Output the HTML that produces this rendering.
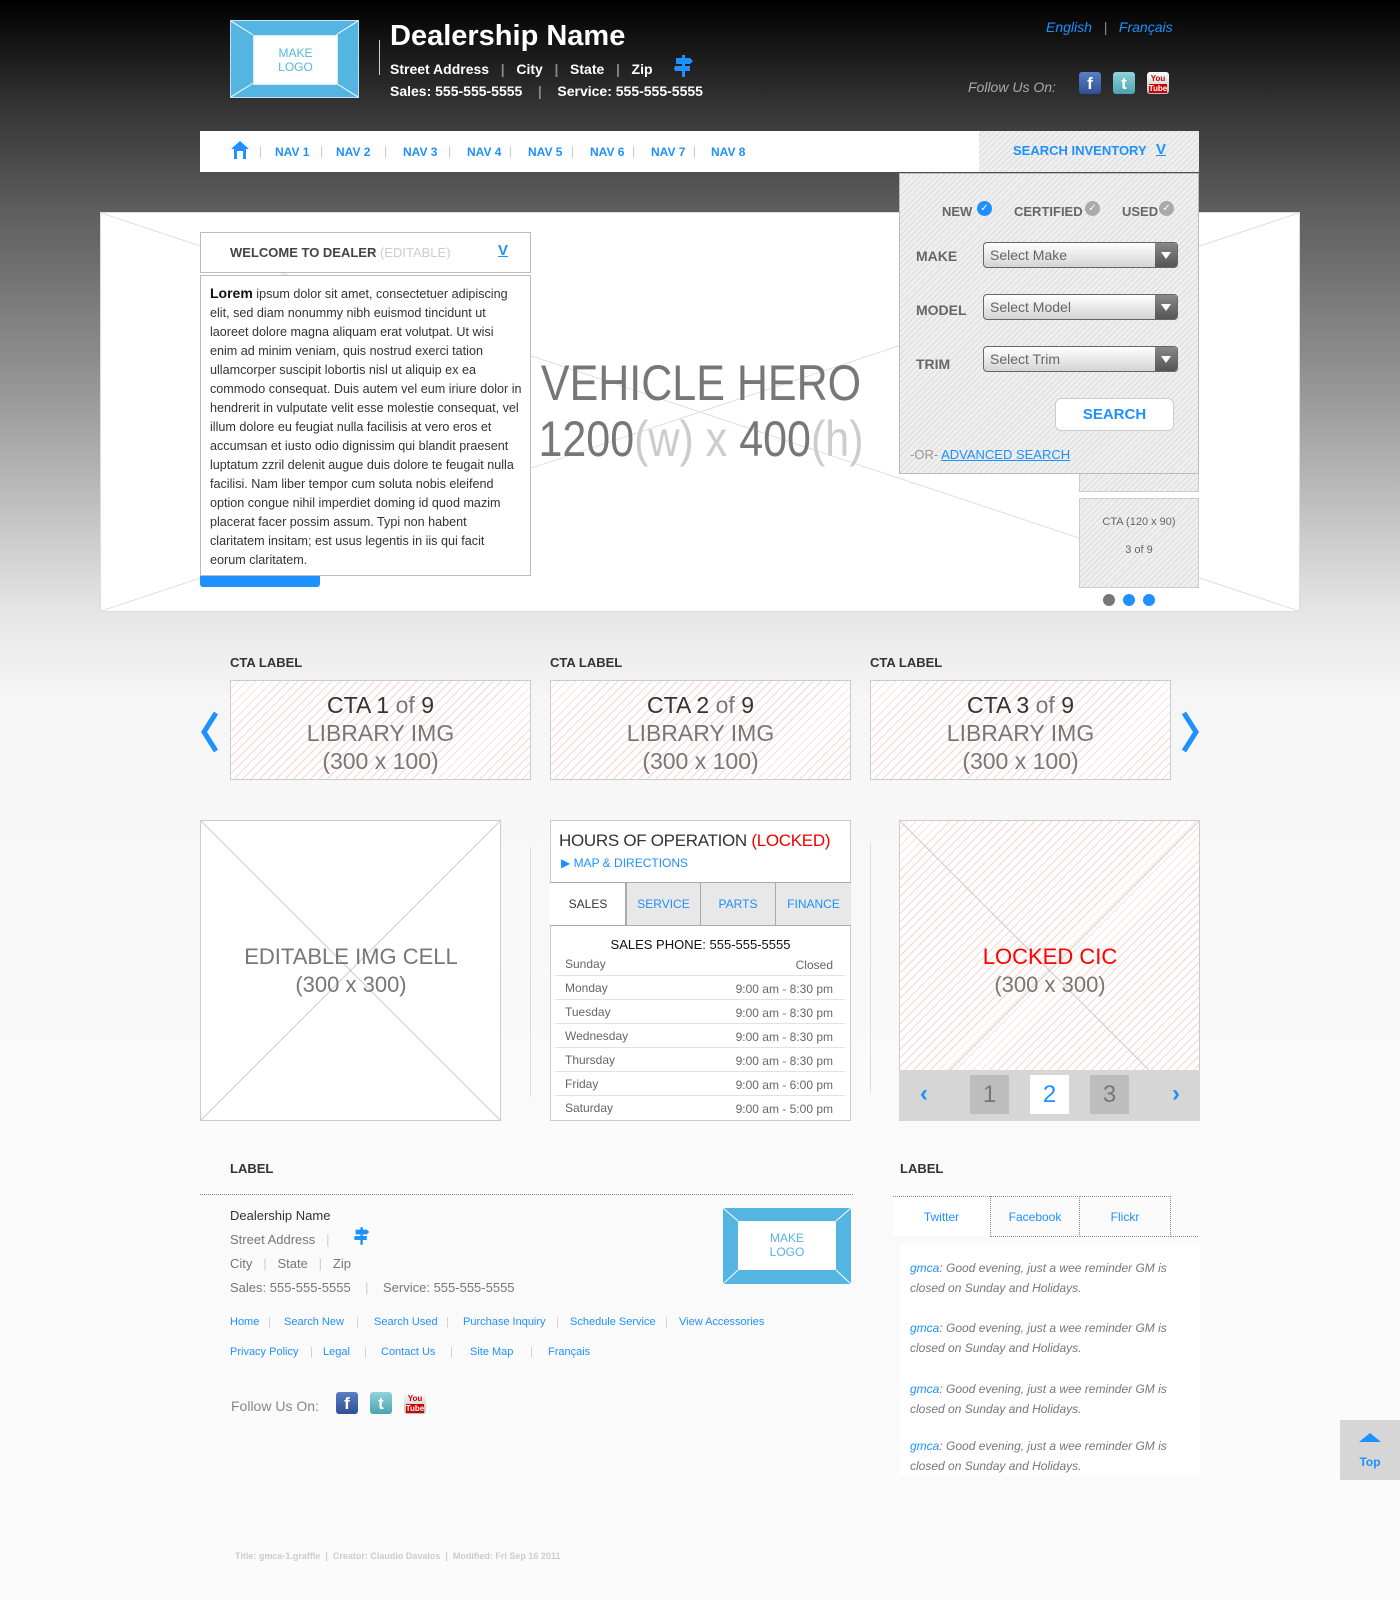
<!DOCTYPE html>
<html><head><meta charset="utf-8">
<style>
*{margin:0;padding:0;box-sizing:border-box}
body{width:1400px;height:1600px;position:relative;overflow:hidden;font-family:"Liberation Sans","DejaVu Sans",sans-serif;background:linear-gradient(#000 0px,#3a3a3a 120px,#5e5e5e 212px,#9a9a9a 400px,#e6e6e6 612px,#f6f6f6 700px,#fafafa 1100px,#fbfbfb 1600px)}
.a{position:absolute}
.blue{color:#1e90ff}
.x{position:absolute;inset:0;width:100%;height:100%}
.stripe{background:repeating-linear-gradient(135deg,#efefef 0 3px,#dcdcdc 3px 4px)}
.pink{background:repeating-linear-gradient(135deg,#fff 0 5px,#f8d6d0 5px 6px)}
.nav span{position:absolute;top:14px;font-size:12px;font-weight:bold;color:#1e90ff}
.nav i{position:absolute;top:15px;width:1px;height:12px;background:#ccc}
.sel{position:absolute;left:983px;width:195px;height:26px;border:1px solid #666;border-radius:4px;background:linear-gradient(#fff,#d4d4d4);font-size:14px;color:#666;padding:4px 6px}
.sel b{position:absolute;right:0;top:0;width:22px;height:24px;background:linear-gradient(#888,#555);border-radius:0 3px 3px 0}
.sel b:after{content:"";position:absolute;left:6px;top:9px;border:5px solid transparent;border-top:7px solid #fff}
.lbl{position:absolute;left:916px;font-size:14px;font-weight:bold;color:#666}
.cta{position:absolute;top:680px;width:301px;height:100px;border:1px solid #ccc;text-align:center;font-size:23px;color:#777;line-height:28px;padding-top:10px}
.cta b{font-weight:normal;color:#333}
.ctal{position:absolute;top:655px;font-size:13px;font-weight:bold;color:#333}
.row{position:absolute;left:555px;width:290px;height:24px;border-bottom:1px solid #e2e2e2;font-size:12px;color:#666}
.row span{position:absolute;left:10px;top:5px}
.row em{position:absolute;right:12px;top:6px;font-style:normal}
.tab{position:absolute;top:883px;height:42px;width:75px;border-right:1px solid #aaa;background:#e8e8e8;color:#1e90ff;font-size:12px;text-align:center;line-height:42px}
.fl{position:absolute;font-size:11px;color:#1e90ff;top:1316px}
.fs{position:absolute;font-size:11px;color:#ccc}
.tw{position:absolute;left:910px;font-size:12px;font-style:italic;color:#777;line-height:20px;width:270px}
.tw span{color:#1e90ff}
.ico{position:absolute;width:22px;height:22px;border-radius:3px;color:#fff;font-weight:bold;text-align:center;font-size:17px;line-height:24px}
.chk{position:absolute;top:201px;width:15px;height:15px;border-radius:8px;background:#aaa;color:#fff;font-size:10px;text-align:center;line-height:15px}
.opt{position:absolute;top:204px;font-size:13px;font-weight:bold;color:#666}
</style></head><body>

<!-- header -->
<div class="a" style="left:230px;top:20px;width:129px;height:78px;background:#55b5e2;border:1px solid #bfe3f5">
<svg class="x" viewBox="0 0 129 78" preserveAspectRatio="none"><line x1="0" y1="0" x2="22" y2="14" stroke="#fff"/><line x1="129" y1="0" x2="107" y2="14" stroke="#fff"/><line x1="0" y1="78" x2="22" y2="64" stroke="#fff"/><line x1="129" y1="78" x2="107" y2="64" stroke="#fff"/></svg>
<div class="a" style="left:22px;top:14px;width:85px;height:50px;background:#fff;border:1px solid #d8eef9;color:#55b5e2;font-size:12px;text-align:center;line-height:14px;padding-top:10px">MAKE<br>LOGO</div></div>
<div class="a" style="left:379px;top:40px;width:1px;height:35px;background:#ccc"></div>
<div class="a" style="left:390px;top:20px;font-size:29px;font-weight:bold;color:#fff">Dealership Name</div>
<div class="a" style="left:390px;top:61px;font-size:14px;font-weight:bold;color:#fff;white-space:pre">Street Address   <span style="color:#888">|</span>   City   <span style="color:#888">|</span>   State   <span style="color:#888">|</span>   Zip</div>
<svg class="a" style="left:674px;top:55px" width="20" height="22" viewBox="0 0 20 22"><rect x="8" y="0" width="3" height="22" fill="#1e90ff"/><path d="M2 3h14l3 3-3 3H2z M1 11h15v5H1l-1-2.5z" fill="#1e90ff"/></svg>
<div class="a" style="left:390px;top:83px;font-size:14px;font-weight:bold;color:#fff;white-space:pre">Sales: 555-555-5555    <span style="color:#888">|</span>    Service: 555-555-5555</div>
<div class="a" style="left:1046px;top:19px;font-size:14px;font-style:italic;color:#1e90ff;white-space:pre">English   <span style="color:#888">|</span>   Français</div>
<div class="a" style="left:968px;top:79px;font-size:14px;font-style:italic;color:#aaa">Follow Us On:</div>
<div class="ico" style="left:1079px;top:72px;background:linear-gradient(#5a7fc4,#2f4f95)">f</div>
<div class="ico" style="left:1113px;top:72px;background:linear-gradient(#8fd3dc,#4aa3ae)">t</div>
<div class="ico" style="left:1147px;top:72px;background:linear-gradient(#fff,#bbb);color:#c00;font-size:8px;line-height:10px;padding-top:2px">You<br><span style="background:#c00;color:#fff">Tube</span></div>

<!-- nav -->
<div class="a nav" style="left:200px;top:131px;width:999px;height:41px;background:#fff">
<svg class="a" style="left:30px;top:9px" width="20" height="20" viewBox="0 0 20 20"><path d="M10 1L1 9h3v10h12V9h3z" fill="#1e90ff"/><path d="M7 11h6v8H7z" fill="#fff"/></svg>
<i style="left:60px"></i><span style="left:75px">NAV 1</span><i style="left:121px"></i><span style="left:136px">NAV 2</span><i style="left:185px"></i><span style="left:203px">NAV 3</span><i style="left:249px"></i><span style="left:267px">NAV 4</span><i style="left:310px"></i><span style="left:328px">NAV 5</span><i style="left:372px"></i><span style="left:390px">NAV 6</span><i style="left:433px"></i><span style="left:451px">NAV 7</span><i style="left:494px"></i><span style="left:511px">NAV 8</span>
<div class="a stripe" style="left:779px;top:0;width:220px;height:41px"><span style="left:34px;top:12px;font-size:13px">SEARCH INVENTORY</span><span style="left:177px;top:10px;font-size:15px;text-decoration:underline">V</span></div>
</div>

<!-- hero -->
<div class="a" style="left:100px;top:212px;width:1200px;height:400px;background:#fff;border:1px solid #ddd">
<svg class="x" viewBox="0 0 1200 400" preserveAspectRatio="none"><line x1="0" y1="0" x2="1200" y2="400" stroke="#ddd"/><line x1="1200" y1="0" x2="0" y2="400" stroke="#ddd"/></svg>
<div class="a" style="left:0;top:142px;width:1200px;text-align:center;font-size:50px;color:#777;line-height:56px;transform:scaleX(0.86)">VEHICLE HERO<br>1200<span style="color:#ccc">(w)</span> <span style="color:#ccc">x</span> 400<span style="color:#ccc">(h)</span></div>
</div>
<div class="a" style="left:200px;top:568px;width:120px;height:19px;background:#1e90ff;border-radius:0 0 3px 3px"></div>
<div class="a" style="left:200px;top:232px;width:331px;height:41px;background:#fff;border:1px solid #bbb;font-size:13px;font-weight:bold;color:#444;padding:12px 0 0 29px">WELCOME TO DEALER <span style="color:#ccc;font-weight:normal">(EDITABLE)</span><span class="a blue" style="left:297px;top:9px;font-size:15px;text-decoration:underline">V</span></div>
<div class="a" style="left:200px;top:275px;width:331px;height:301px;background:#fff;border:1px solid #bbb;font-size:12.6px;color:#333;line-height:19px;padding:8px 8px 0 9px"><b style="font-size:14px;color:#111">Lorem</b> ipsum dolor sit amet, consectetuer adipiscing elit, sed diam nonummy nibh euismod tincidunt ut laoreet dolore magna aliquam erat volutpat. Ut wisi enim ad minim veniam, quis nostrud exerci tation ullamcorper suscipit lobortis nisl ut aliquip ex ea commodo consequat. Duis autem vel eum iriure dolor in hendrerit in vulputate velit esse molestie consequat, vel illum dolore eu feugiat nulla facilisis at vero eros et accumsan et iusto odio dignissim qui blandit praesent luptatum zzril delenit augue duis dolore te feugait nulla facilisi. Nam liber tempor cum soluta nobis eleifend option congue nihil imperdiet doming id quod mazim placerat facer possim assum. Typi non habent claritatem insitam; est usus legentis in iis qui facit eorum claritatem.</div>

<!-- search panel -->
<div class="a stripe" style="left:1079px;top:470px;width:120px;height:22px;border:1px solid #ccc"></div>
<div class="a stripe" style="left:1079px;top:498px;width:120px;height:90px;border:1px solid #ccc;text-align:center;font-size:11px;color:#666;line-height:28px;padding-top:9px">CTA (120 x 90)<br>3 of 9</div>
<div class="a" style="left:1103px;top:594px;width:12px;height:12px;border-radius:6px;background:#777"></div>
<div class="a" style="left:1123px;top:594px;width:12px;height:12px;border-radius:6px;background:#1e90ff"></div>
<div class="a" style="left:1143px;top:594px;width:12px;height:12px;border-radius:6px;background:#1e90ff"></div>
<div class="a stripe" style="left:899px;top:173px;width:300px;height:301px;border:1px solid #bbb"></div>
<div class="opt" style="left:942px">NEW</div>
<div class="chk" style="left:977px;background:#1e90ff">✓</div>
<div class="opt" style="left:1014px">CERTIFIED</div>
<div class="chk" style="left:1085px">✓</div>
<div class="opt" style="left:1122px">USED</div>
<div class="chk" style="left:1159px">✓</div>
<div class="lbl" style="top:248px">MAKE</div><div class="sel" style="top:242px">Select Make<b></b></div>
<div class="lbl" style="top:302px">MODEL</div><div class="sel" style="top:294px">Select Model<b></b></div>
<div class="lbl" style="top:356px">TRIM</div><div class="sel" style="top:346px">Select Trim<b></b></div>
<div class="a" style="left:1055px;top:398px;width:119px;height:33px;background:#fff;border:1px solid #ccc;border-radius:6px;text-align:center;line-height:32px;font-size:15px;font-weight:bold;color:#1e90ff">SEARCH</div>
<div class="a" style="left:910px;top:447px;font-size:13px;color:#999">-OR- <span style="color:#1e90ff;text-decoration:underline">ADVANCED SEARCH</span></div>

<!-- CTA row -->
<div class="ctal" style="left:230px">CTA LABEL</div><div class="ctal" style="left:550px">CTA LABEL</div><div class="ctal" style="left:870px">CTA LABEL</div>
<div class="cta pink" style="left:230px"><b>CTA 1</b> of <b>9</b><br>LIBRARY IMG<br>(300 x 100)</div>
<div class="cta pink" style="left:550px"><b>CTA 2</b> of <b>9</b><br>LIBRARY IMG<br>(300 x 100)</div>
<div class="cta pink" style="left:870px"><b>CTA 3</b> of <b>9</b><br>LIBRARY IMG<br>(300 x 100)</div>
<svg class="a" style="left:198px;top:710px" width="24" height="44" viewBox="0 0 24 44"><path d="M18 3L6 22l12 19" fill="none" stroke="#1e90ff" stroke-width="5"/></svg>
<svg class="a" style="left:1178px;top:710px" width="24" height="44" viewBox="0 0 24 44"><path d="M6 3l12 19L6 41" fill="none" stroke="#1e90ff" stroke-width="5"/></svg>

<!-- editable img -->
<div class="a" style="left:200px;top:820px;width:301px;height:301px;background:#fff;border:1px solid #ccc">
<svg class="x" viewBox="0 0 300 300"><line x1="0" y1="0" x2="300" y2="300" stroke="#ccc"/><line x1="300" y1="0" x2="0" y2="300" stroke="#ccc"/></svg>
<div class="a" style="left:0;top:122px;width:300px;text-align:center;font-size:22px;color:#777;line-height:28px">EDITABLE IMG CELL<br>(300 x 300)</div></div>
<div class="a" style="left:530px;top:847px;width:1px;height:250px;background:#ddd"></div>
<div class="a" style="left:870px;top:843px;width:1px;height:250px;background:#ddd"></div>

<!-- hours -->
<div class="a" style="left:550px;top:820px;width:301px;height:301px;background:#fff;border:1px solid #ccc"></div>
<div class="a" style="left:559px;top:831px;font-size:17px;color:#333;letter-spacing:-0.3px">HOURS OF OPERATION <span style="color:#e00">(LOCKED)</span></div>
<div class="a" style="left:561px;top:856px;font-size:12px;color:#1e90ff">▶ MAP &amp; DIRECTIONS</div>
<div class="a" style="left:550px;top:882px;width:301px;height:44px;border-top:1px solid #aaa;border-bottom:1px solid #aaa;background:#fff"></div>
<div class="tab" style="left:551px;background:#fff;color:#333">SALES</div>
<div class="tab" style="left:626px;border-left:1px solid #aaa">SERVICE</div>
<div class="tab" style="left:701px">PARTS</div>
<div class="tab" style="left:776px;border-right:none">FINANCE</div>
<div class="a" style="left:550px;top:937px;width:301px;text-align:center;font-size:13px;color:#111">SALES PHONE: 555-555-5555</div>
<div class="row" style="top:952px"><span>Sunday</span><em>Closed</em></div>
<div class="row" style="top:976px"><span>Monday</span><em>9:00 am - 8:30 pm</em></div>
<div class="row" style="top:1000px"><span>Tuesday</span><em>9:00 am - 8:30 pm</em></div>
<div class="row" style="top:1024px"><span>Wednesday</span><em>9:00 am - 8:30 pm</em></div>
<div class="row" style="top:1048px"><span>Thursday</span><em>9:00 am - 8:30 pm</em></div>
<div class="row" style="top:1072px"><span>Friday</span><em>9:00 am - 6:00 pm</em></div>
<div class="row" style="top:1096px;border:none"><span>Saturday</span><em>9:00 am - 5:00 pm</em></div>

<!-- locked cic -->
<div class="a pink" style="left:899px;top:820px;width:301px;height:301px;border:1px solid #ccc">
<svg class="x" viewBox="0 0 300 300"><line x1="0" y1="0" x2="300" y2="300" stroke="#ccc"/><line x1="300" y1="0" x2="0" y2="300" stroke="#ccc"/></svg>
<div class="a" style="left:0;top:122px;width:300px;text-align:center;font-size:22px;color:#777;line-height:28px"><span style="color:#f00">LOCKED CIC</span><br>(300 x 300)</div></div>
<div class="a" style="left:899px;top:1070px;width:301px;height:51px;background:#d6d6d6"></div>
<div class="a" style="left:920px;top:1080px;font-size:24px;color:#1e90ff;font-weight:bold">‹</div>
<div class="a" style="left:1172px;top:1080px;font-size:24px;color:#1e90ff;font-weight:bold">›</div>
<div class="a" style="left:970px;top:1075px;width:39px;height:39px;background:#bdbdbd;text-align:center;font-size:24px;line-height:39px;color:#777">1</div>
<div class="a" style="left:1030px;top:1075px;width:39px;height:39px;background:#fff;text-align:center;font-size:24px;line-height:39px;color:#1e90ff">2</div>
<div class="a" style="left:1090px;top:1075px;width:39px;height:39px;background:#bdbdbd;text-align:center;font-size:24px;line-height:39px;color:#777">3</div>

<!-- footer left -->
<div class="a" style="left:230px;top:1161px;font-size:13px;font-weight:bold;color:#333">LABEL</div>
<div class="a" style="left:200px;top:1194px;width:653px;border-top:1px dotted #888"></div>
<div class="a" style="left:230px;top:1208px;font-size:13px;color:#333">Dealership Name</div>
<div class="a" style="left:230px;top:1232px;font-size:13px;color:#777;white-space:pre">Street Address   <span style="color:#ccc">|</span></div>
<svg class="a" style="left:354px;top:1226px" width="16" height="20" viewBox="0 0 20 22"><rect x="8" y="0" width="3" height="22" fill="#1e90ff"/><path d="M2 3h14l3 3-3 3H2z M1 11h15v5H1l-1-2.5z" fill="#1e90ff"/></svg>
<div class="a" style="left:230px;top:1256px;font-size:13px;color:#777;white-space:pre">City   <span style="color:#ccc">|</span>   State   <span style="color:#ccc">|</span>   Zip</div>
<div class="a" style="left:230px;top:1280px;font-size:13px;color:#777;white-space:pre">Sales: 555-555-5555    <span style="color:#ccc">|</span>    Service: 555-555-5555</div>
<div class="a" style="left:723px;top:1208px;width:128px;height:76px;background:#55b5e2">
<svg class="x" viewBox="0 0 128 76" preserveAspectRatio="none"><line x1="0" y1="0" x2="15" y2="13" stroke="#fff"/><line x1="128" y1="0" x2="113" y2="13" stroke="#fff"/><line x1="0" y1="76" x2="15" y2="62" stroke="#fff"/><line x1="128" y1="76" x2="113" y2="62" stroke="#fff"/></svg>
<div class="a" style="left:15px;top:13px;width:98px;height:49px;background:#fff;color:#55b5e2;font-size:12px;text-align:center;line-height:14px;padding-top:10px">MAKE<br>LOGO</div></div>
<div class="fl" style="left:230px">Home</div><div class="fs" style="left:268px;top:1316px">|</div>
<div class="fl" style="left:284px">Search New</div><div class="fs" style="left:356px;top:1316px">|</div>
<div class="fl" style="left:374px">Search Used</div><div class="fs" style="left:446px;top:1316px">|</div>
<div class="fl" style="left:463px">Purchase Inquiry</div><div class="fs" style="left:556px;top:1316px">|</div>
<div class="fl" style="left:570px">Schedule Service</div><div class="fs" style="left:665px;top:1316px">|</div>
<div class="fl" style="left:679px">View Accessories</div>
<div class="fl" style="left:230px;top:1346px">Privacy Policy</div><div class="fs" style="left:310px;top:1346px">|</div>
<div class="fl" style="left:323px;top:1346px">Legal</div><div class="fs" style="left:364px;top:1346px">|</div>
<div class="fl" style="left:381px;top:1346px">Contact Us</div><div class="fs" style="left:450px;top:1346px">|</div>
<div class="fl" style="left:470px;top:1346px">Site Map</div><div class="fs" style="left:530px;top:1346px">|</div>
<div class="fl" style="left:548px;top:1346px">Français</div>
<div class="a" style="left:231px;top:1398px;font-size:14px;color:#888">Follow Us On:</div>
<div class="ico" style="left:336px;top:1392px;background:linear-gradient(#5a7fc4,#2f4f95)">f</div>
<div class="ico" style="left:370px;top:1392px;background:linear-gradient(#8fd3dc,#4aa3ae)">t</div>
<div class="ico" style="left:404px;top:1392px;background:linear-gradient(#fff,#bbb);color:#c00;font-size:8px;line-height:10px;padding-top:2px">You<br><span style="background:#c00;color:#fff">Tube</span></div>

<!-- footer right -->
<div class="a" style="left:900px;top:1161px;font-size:13px;font-weight:bold;color:#333">LABEL</div>
<div class="a" style="left:893px;top:1196px;width:97px;height:40px;background:#fff;border-top:1px dotted #888;text-align:center;line-height:40px;font-size:12px;color:#1e90ff">Twitter</div>
<div class="a" style="left:990px;top:1196px;width:90px;height:41px;border:1px dotted #888;text-align:center;line-height:40px;font-size:12px;color:#1e90ff">Facebook</div>
<div class="a" style="left:1080px;top:1196px;width:91px;height:41px;border:1px dotted #888;border-left:none;text-align:center;line-height:40px;font-size:12px;color:#1e90ff">Flickr</div>
<div class="a" style="left:1171px;top:1236px;width:27px;border-top:1px dotted #888"></div>
<div class="a" style="left:900px;top:1245px;width:300px;height:230px;background:#fff"></div>
<div class="tw" style="top:1258px"><span>gmca</span><span style="color:#e44">:</span> Good evening, just a wee reminder GM is closed on Sunday and Holidays.</div>
<div class="tw" style="top:1318px"><span>gmca</span><span style="color:#e44">:</span> Good evening, just a wee reminder GM is closed on Sunday and Holidays.</div>
<div class="tw" style="top:1379px"><span>gmca</span><span style="color:#e44">:</span> Good evening, just a wee reminder GM is closed on Sunday and Holidays.</div>
<div class="tw" style="top:1436px"><span>gmca</span><span style="color:#e44">:</span> Good evening, just a wee reminder GM is closed on Sunday and Holidays.</div>

<div class="a" style="left:1340px;top:1420px;width:60px;height:60px;background:#d6d6d6">
<div class="a" style="left:19px;top:13px;border:11px solid transparent;border-bottom:9px solid #1e90ff;border-top:none"></div>
<div class="a" style="left:0;top:35px;width:60px;text-align:center;font-size:12px;font-weight:bold;color:#1e90ff">Top</div></div>

<div class="a" style="left:235px;top:1551px;font-size:9px;font-weight:bold;color:#ccc">Title: gmca-1.graffle &nbsp;|&nbsp; Creator: Claudio Davalos &nbsp;|&nbsp; Modified: Fri Sep 16 2011</div>
</body></html>
